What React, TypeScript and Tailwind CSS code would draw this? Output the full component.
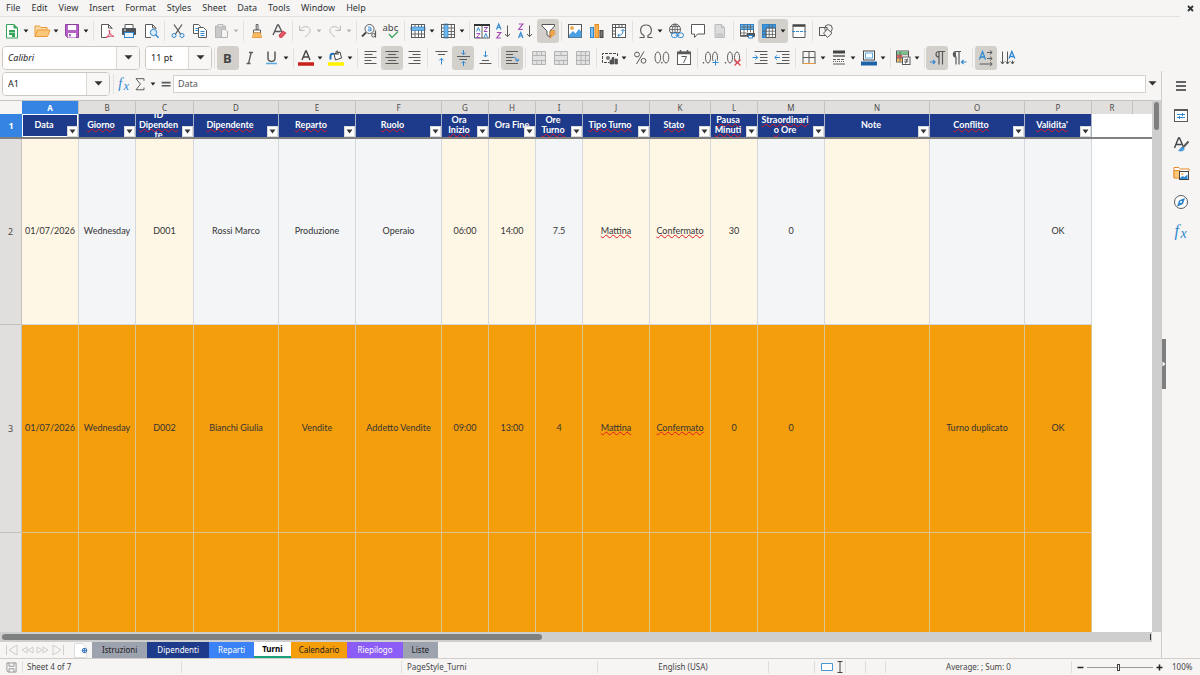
import React, { ReactNode } from "react";

const INK = "#5a5a5a";
const BLUE = "#2f87d0";

function Svg({ children, size = 18 }: { children: ReactNode; size?: number }) {
  return (
    <svg width={size} height={size} viewBox="0 0 18 18" fill="none" stroke={INK} strokeWidth="1" aria-hidden="true" className="shrink-0">
      {children}
    </svg>
  );
}

function Caret({ light = false }: { light?: boolean }) {
  return (
    <svg width="6" height="4" viewBox="0 0 6 4" aria-hidden="true" className="mt-px shrink-0">
      <path d="M0.6 0.5h4.8L3 3.6z" fill={light ? "#b5b5b5" : "#1f1f1f"} />
    </svg>
  );
}

function BigCaret() {
  return (
    <svg width="9" height="5" viewBox="0 0 9 5" aria-hidden="true">
      <path d="M0.5 0.3h8L4.5 4.6z" fill="#333" />
    </svg>
  );
}

const icons: Record<string, ReactNode> = {
  newDoc: (
    <>
      <path d="M3.500 2.500h7.500l3.500 3.500v10H3.500z" fill="#fff" stroke="#35a35a" />
      <path d="M11 2.500v3.500h3.500" fill="#35a35a" stroke="#35a35a" />
      <path d="M6 8h6v5H6z" fill="#35a35a" stroke="none" />
      <path d="M6 10.500h6" stroke="#bfe5cb" strokeWidth=".8" />
      <path d="M9 13h3v2H9z" fill="#35a35a" stroke="none" />
    </>
  ),
  open: (
    <>
      <path d="M2 14.500V4h4.500l1.500 1.500h6V8" fill="#fbd9a0" stroke="#ea9b3a" />
      <path d="M2 14.500L4.500 8H17l-2.500 6.500z" fill="#fbc879" stroke="#ea9b3a" />
    </>
  ),
  save: (
    <>
      <path d="M2.500 2.500h13v13h-11l-2-2z" fill="#b563c4" stroke="#8f3fa2" />
      <rect x="5" y="3" width="8" height="5" fill="#fff" stroke="none" />
      <rect x="5" y="11" width="8" height="4.500" fill="#fff" stroke="none" />
      <path d="M7 12v2.500" stroke="#8f3fa2" strokeWidth="1.500" />
    </>
  ),
  pdf: (
    <>
      <path d="M14 7V6l-3.500-3.500H3.500v13h5M10.500 2.500V6H14" fill="#fff" />
      <path d="M8 15.500c3-2 4.500-5 3.500-7.500-1 .5 0 5 4.500 6.500-2.500-.8-5-.5-8 1z" stroke="#d9435a" />
    </>
  ),
  print: (
    <>
      <path d="M5 6V2.500h8V6" fill="#fff" />
      <rect x="2" y="6" width="14" height="7" rx="1" fill="#4d5358" stroke="none" />
      <rect x="4.500" y="10.500" width="9" height="5" fill="#e8f3fc" stroke={BLUE} />
      <path d="M4 8h2" stroke="#fff" />
    </>
  ),
  preview: (
    <>
      <path d="M14 7V6l-3.500-3.500H3.500v13H9M10.500 2.500V6H14" fill="#fff" />
      <circle cx="11.500" cy="10.500" r="3.200" fill="#d9edfc" stroke={BLUE} />
      <path d="M13.800 12.800l2.700 3" stroke={BLUE} strokeWidth="1.400" />
    </>
  ),
  cut: (
    <>
      <path d="M5 2.500l6.500 9.500M13 2.500L6.500 12" strokeWidth="1.300" />
      <circle cx="5" cy="13.500" r="2" stroke={BLUE} />
      <circle cx="13" cy="13.500" r="2" stroke={BLUE} />
    </>
  ),
  copy: (
    <>
      <path d="M2.500 2.500h5l2 2v7h-7z" fill="#fff" />
      <path d="M4.500 6.500h3M4.500 8.500h3" stroke={BLUE} />
      <path d="M7.500 5.500h5l3 3v7h-8z" fill="#fff" />
      <path d="M9.500 9.500h4M9.500 11.500h4M9.500 13.500h4" stroke={BLUE} />
    </>
  ),
  paste: (
    <>
      <path d="M2.500 4h10v11.500h-10z" fill="#c9c9c9" stroke="#b5b5b5" />
      <path d="M5 2.500h5v2.500H5z" fill="#eee" stroke="#b5b5b5" />
      <path d="M8.500 7.500h4l2 2v6h-6z" fill="#f4f4f4" stroke="#b5b5b5" />
    </>
  ),
  brush: (
    <>
      <path d="M8.200 2.500h1.800v5.500H8.200z" fill="#fff" />
      <path d="M5.500 8h7v3h-7z" fill="#fff" />
      <path d="M5.500 11h7l1 4.500h-9z" fill="#fbc879" stroke="#ea9b3a" />
      <path d="M7 12v3M9 12v3M11 12v3" stroke="#ea9b3a" strokeWidth=".6" />
    </>
  ),
  clear: (
    <>
      <path d="M3 13L7.500 3h1L12 10M4.700 9.500h6" strokeWidth="1.400" />
      <path d="M9 13l4-4 3 2-4 4.500H9.800z" fill="#e25563" stroke="#c9303f" strokeWidth=".7" />
    </>
  ),
  undo: <path d="M3.500 3.500v5h5M3.500 8.500c3-5 9.500-5 10.500-1 .8 3-2.500 5.500-5 7.500" stroke="#bdbdbd" />,
  redo: <path d="M14.500 3.500v5h-5M14.500 8.500c-3-5-9.500-5-10.500-1-.8 3 2.500 5.500 5 7.500" stroke="#bdbdbd" />,
  find: (
    <>
      <circle cx="9.500" cy="7" r="4.500" fill="#fff" />
      <path d="M6 10.500l-4 4" strokeWidth="1.800" stroke="#444" />
      <path d="M8 5.500c1.500-1 3-.5 3 .8v2.700M11 7c-2-.3-3 .3-3 1.200s2 1.300 3 0" stroke={BLUE} />
      <circle cx="13.500" cy="13.200" r="1.800" />
      <path d="M15.500 8.500v7" strokeWidth="1.200" />
    </>
  ),
  spell: (
    <>
      <text x="0.500" y="8.500" fontSize="9.500" fontFamily="Noto Sans" fill="#444" stroke="none">abc</text>
      <path d="M7 12l3 3.500 6-6" stroke="#43a868" strokeWidth="1.400" />
    </>
  ),
  rowOp: (
    <>
      <rect x="2.500" y="2.500" width="13" height="13" fill="#fff" />
      <rect x="2" y="5" width="14" height="3.500" fill="#6db6ec" stroke={BLUE} strokeWidth=".7" />
      <path d="M2.500 2.500h13v13h-13zM2.500 12h13M6 2.500v2.500M6 8.500v7M9.500 2.500v2.500M9.500 8.500v7M12.500 2.500v2.500M12.500 8.500v7" strokeWidth=".9" />
    </>
  ),
  colOp: (
    <>
      <rect x="2.500" y="2.500" width="13" height="13" fill="#fff" />
      <rect x="5" y="2" width="4" height="14" fill="#6db6ec" stroke={BLUE} strokeWidth=".7" />
      <path d="M2.500 2.500h13v13h-13zM12.300 2.500v13M2.500 6H5M9 6h6.500M2.500 9.500H5M9 9.500h6.500M2.500 12.500H5M9 12.500h6.500" strokeWidth=".9" />
    </>
  ),
  sort: (
    <>
      <path d="M1.500 2.500h15v13.500h-15zM9 2.500v13.500" fill="#fff" />
      <path d="M1 3h16" stroke="#333" strokeWidth="2" />
      <path d="M3.500 9.500l1.800-4 1.800 4M11 15.500l1.800-4 1.800 4" stroke={BLUE} />
      <path d="M3.500 11.500h3.500l-3.500 4h3.500M11 5.500h3.500l-3.500 4h3.500" stroke="#a24bb5" />
    </>
  ),
  asc: (
    <>
      <path d="M1.500 7.500l2.200-5.500L6 7.500M2.300 5.500h3" stroke={BLUE} strokeWidth="1.200" />
      <path d="M1.800 10.500h4l-4 5.500h4" stroke="#a24bb5" strokeWidth="1.200" />
      <path d="M12.500 3.500v11M10 12l2.500 2.700L15 12" />
    </>
  ),
  desc: (
    <>
      <path d="M1.800 2h4l-4 5.500h4" stroke="#a24bb5" strokeWidth="1.200" />
      <path d="M1.500 16l2.200-5.500L6 16M2.300 14h3" stroke={BLUE} strokeWidth="1.200" />
      <path d="M12.500 3.500v11M10 12l2.500 2.700L15 12" />
    </>
  ),
  filter: (
    <>
      <path d="M3 2.500h12.500v1.500L11 9v6l-3-2V9L3 4z" fill="#fff" stroke="#555" />
      <path d="M12 8.500h4l-2 2.500h2.500l-5.500 5.500 1.300-4h-2z" fill="#f5a94b" stroke="#df7f1f" strokeWidth=".6" />
    </>
  ),
  image: (
    <>
      <rect x="2.500" y="2.500" width="13" height="13" fill="#fff" />
      <path d="M3 13l4-4 2.500 2.500L13 7l2.500 3v5.500H3z" fill="#4aa0e0" stroke="none" />
      <circle cx="6" cy="6" r="1.500" fill="#f9b455" stroke="#e58a22" strokeWidth=".6" />
    </>
  ),
  chart: (
    <>
      <rect x="2.500" y="5.500" width="3" height="10" fill="#7fc0f0" stroke={BLUE} />
      <rect x="7" y="2.500" width="3.500" height="13" fill="#f9b455" stroke="#e58a22" />
      <rect x="12" y="8.500" width="3" height="7" fill="#777" stroke="#444" />
    </>
  ),
  pivot: (
    <>
      <rect x="2.500" y="2.500" width="13" height="13" fill="#fff" />
      <path d="M2.500 5.500h13M5.500 2.500v13M9 2.500v3M12 2.500v3M2.500 9h3M2.500 12h3" />
      <path d="M8 13.500c4 0 5-2 5-6M11.300 9l1.700-1.700L14.700 9M9.500 11.800L7.800 13.500l1.700 1.500" stroke={BLUE} />
    </>
  ),
  omega: <path d="M2.500 15.500H7v-2C2 11 2.500 3 9 3s7 8 2 10.500v2h4.500" strokeWidth="1.200" />,
  link: (
    <>
      <circle cx="8" cy="7.500" r="5.500" />
      <path d="M2.500 7.500h11M8 2v11M3.500 4.500h9M4 10.500h8M8 2c-3.500 3-3.500 8 0 11M8 2c3.500 3 3.500 8 0 11" strokeWidth=".8" />
      <rect x="4.500" y="11" width="6" height="4.500" rx="2.200" fill="#f6f5f4" stroke={BLUE} />
      <rect x="10.500" y="11" width="6" height="4.500" rx="2.200" fill="#f6f5f4" stroke={BLUE} />
      <path d="M8.500 13.200h4" stroke={BLUE} />
    </>
  ),
  comment: <path d="M2.500 2.500h13v9.500H8.500L5.500 15.500V12h-3z" fill="#fff" />,
  header: (
    <>
      <path d="M4 2.500h6.500l3 3v10H4z" fill="#dcdcdc" stroke="#bcbcbc" />
      <path d="M10.500 2.500v3h3M6 12h5.500v2H6z" stroke="#bcbcbc" />
    </>
  ),
  printArea: (
    <>
      <path d="M2.500 2.500h13v11h-13z" fill="#fff" />
      <path d="M2.500 2.500h13v5h-13z" fill="#6db6ec" stroke={BLUE} />
      <path d="M2.500 7.500v7h6M2.500 11h6M6 2.500v12M9.500 2.500v8M12.500 2.500v8M2.500 5h13M15.500 7.500v3" strokeWidth=".8" />
      <path d="M9 11.500h7.500v3H9z" fill="#4d5358" stroke="#4d5358" />
      <path d="M10.500 13.500h4v2.500h-4z" fill="#fff" stroke={BLUE} />
    </>
  ),
  freeze: (
    <>
      <rect x="2.500" y="2.500" width="13" height="13" fill="#fff" />
      <path d="M2.500 2.500h13v3.500h-9.500v9.500h-3.500z" fill="#3d93d8" stroke={BLUE} />
      <path d="M6 6h9.500M2.500 9.200h13M2.500 12.400h13M6 6v9.500M9.200 2.500v13M12.400 2.500v13M6 15.500h9.500V6" strokeWidth=".8" />
    </>
  ),
  split: (
    <>
      <path d="M3 4.500v11h12v-11" fill="#fff" />
      <path d="M2.500 3.500h13" stroke="#444" strokeWidth="2.500" />
      <path d="M2 9.500h14" stroke={BLUE} strokeDasharray="3 1" />
    </>
  ),
  shapes: (
    <>
      <rect x="2.500" y="5.500" width="7.500" height="8" />
      <circle cx="11.500" cy="6.500" r="3.800" />
      <path d="M10.500 7l4.500 4.200-4.500 4.300-4-4.300z" fill="#f6f5f4" />
    </>
  ),
  bold: <text x="4" y="13.800" fontSize="13" fontWeight="700" fontFamily="Noto Sans" fill="#444" stroke="none">B</text>,
  italic: <path d="M8 3.500h4M5.500 14.500h4M10.200 3.500L7.500 14.500" strokeWidth="1.300" />,
  underline: (
    <>
      <path d="M5 2.500v6.500c0 4.500 7 4.500 7 0V2.500" strokeWidth="1.500" />
      <path d="M3 14.500h11" stroke="#5aaae6" strokeWidth="1.500" />
    </>
  ),
  fontColor: (
    <>
      <path d="M5 11L8.700 2h.6L13 11M6.300 8h5.400" strokeWidth="1.400" stroke="#444" />
      <path d="M1 15h16" stroke="#c9211e" strokeWidth="3.500" />
    </>
  ),
  highlight: (
    <>
      <path d="M7 5l6-2 1.500 6-6 2z" fill="#fff" stroke="#444" />
      <path d="M9 6V3c0-1.500 2-1.500 2 0v3" stroke="#444" />
      <path d="M7 5C4 4 3 5.500 3.500 10.500" stroke="#1b70b8" strokeWidth="2" />
      <path d="M1 15h16" stroke="#fff200" strokeWidth="3.500" />
    </>
  ),
  left: <path d="M3.500 2.500h12M3.500 5.500h8M3.500 8.500h12M3.500 11.500h7M3.500 14.500h12" />,
  center: <path d="M2.500 2.500h13M5 5.500h8M2.500 8.500h13M5 11.500h8M2.500 14.500h13" />,
  right: <path d="M3.500 2.500h12M7.500 5.500h8M3.500 8.500h12M8.500 11.500h7M3.500 14.500h12" />,
  vtop: (
    <>
      <path d="M3.500 2.500h12M6 5.500h7" />
      <path d="M9.500 15.500v-6M7.300 11.500l2.200-2.200 2.200 2.200" stroke={BLUE} />
    </>
  ),
  vmid: (
    <>
      <path d="M3 7.500h13M5.500 10.500h7.500" />
      <path d="M9.500 1v4.500M7.500 3.700l2 2 2-2M9.500 17v-4.500M7.500 14.300l2-2 2 2" stroke={BLUE} />
    </>
  ),
  vbot: (
    <>
      <path d="M3.500 14.500h12M6 11.500h7" />
      <path d="M9.500 2v6M7.500 6l2 2 2-2" stroke={BLUE} />
    </>
  ),
  wrap: (
    <>
      <path d="M3 2.500h12M3 5.500h7M3 8.500h8M3 11.500h6M3 14.500h12" />
      <path d="M9.500 8.500c3-.5 4 .5 5 3.500M12 10.500l2.500 2 1.500-2.500" stroke={BLUE} />
    </>
  ),
  merge1: <path d="M2.500 2.500h13v13h-13zM2.500 6.500h13M2.500 11.500h13M7 2.500v4M11.500 2.500v4M7 11.500v4M11.500 11.500v4" fill="#e2e2e2" stroke="#b3b3b3" />,
  merge2: <path d="M2.500 2.500h13v13h-13zM2.500 6.500h13M2.500 11.500h13M9 2.500v4M7 11.500v4M11.500 11.500v4" fill="#e2e2e2" stroke="#b3b3b3" />,
  merge3: <path d="M2.500 2.500h13v13h-13zM2.500 6.500h13M2.500 11.500h13M7 2.500v13M11.500 2.500v13" fill="#e2e2e2" stroke="#b3b3b3" />,
  currency: (
    <>
      <path d="M16.500 7V4.500h-15v9h7" stroke="#444" strokeDasharray="3 1" />
      <circle cx="7" cy="9" r="2" fill="#777" stroke="none" />
      <path d="M9 15v-4h2V8.500h2V15zM14 15v-5h2.500v5z" fill="#555" stroke="#444" strokeWidth=".6" />
    </>
  ),
  percent: (
    <>
      <circle cx="6" cy="5.500" r="2.400" />
      <circle cx="12.500" cy="11.800" r="2.400" />
      <path d="M13 2.500L5.500 15" />
    </>
  ),
  number: (
    <>
      <ellipse cx="4.800" cy="8.500" rx="2.800" ry="5.500" />
      <ellipse cx="13" cy="8.500" rx="2.800" ry="5.500" />
      <path d="M8.800 13v1.500" strokeWidth="1.300" />
    </>
  ),
  date: (
    <>
      <rect x="2.500" y="3" width="13" height="12.500" fill="#fff" />
      <path d="M2.500 4h13" strokeWidth="2.500" />
      <path d="M5.500 1v3M12.500 1v3" strokeWidth="1.500" />
      <path d="M6.500 7.500h5l-3 6.500" />
    </>
  ),
  addDec: (
    <>
      <path d="M1.500 13v1.500" strokeWidth="1.300" />
      <ellipse cx="6" cy="8.500" rx="2.500" ry="5.500" />
      <ellipse cx="13" cy="8.500" rx="2.500" ry="5.500" />
      <path d="M13.500 10v7M10 13.500h7" stroke="#f6f5f4" strokeWidth="3" />
      <path d="M13.500 10.500v6M10.500 13.500h6" stroke={BLUE} />
    </>
  ),
  delDec: (
    <>
      <path d="M1.500 13v1.500" strokeWidth="1.300" />
      <ellipse cx="6" cy="8.500" rx="2.500" ry="5.500" />
      <ellipse cx="13" cy="8.500" rx="2.500" ry="5.500" />
      <path d="M10.500 10.500l6 6M16.500 10.500l-6 6" stroke="#e0454f" strokeWidth="1.200" />
    </>
  ),
  indent: (
    <>
      <path d="M3.500 2.500h13M9 5.500h7.500M9 8.500h7.500M9 11.500h7.500M3.500 14.500h13" />
      <path d="M1.500 8.500h5M4.500 6.300l2.200 2.200-2.200 2.200" stroke={BLUE} />
    </>
  ),
  outdent: (
    <>
      <path d="M3.500 2.500h13M9 5.500h7.500M9 8.500h7.500M9 11.500h7.500M3.500 14.500h13" />
      <path d="M7 8.500H2M4 6.300L1.800 8.500 4 10.700" stroke={BLUE} />
    </>
  ),
  borders: (
    <>
      <path d="M3 2.500h12M3 15V2.500M15 2.500v12.500M9 2.500v12.500M3 8.500h12" />
      <path d="M3 14.500h12" stroke="#e79a3d" />
    </>
  ),
  lineStyle: (
    <>
      <path d="M3 3h12" strokeWidth="3" stroke="#444" />
      <path d="M3 7h12" strokeWidth="1.500" />
      <path d="M3 10.500h12" strokeDasharray="3 1" />
      <path d="M3 12.500h12" strokeDasharray="1 1" />
      <path d="M3 15h12" />
    </>
  ),
  borderColor: (
    <>
      <rect x="3.500" y="2" width="11" height="9" fill="#fff" stroke="#444" />
      <rect x="5.500" y="4" width="7" height="5" fill="none" stroke="#5aaae6" />
      <path d="M1 14.500h16" stroke="#1f63a8" strokeWidth="4" />
    </>
  ),
  conditional: (
    <>
      <rect x="2.500" y="2" width="12" height="11" fill="#fff" />
      <rect x="3" y="2.500" width="11" height="3" fill="#74c48a" stroke="none" />
      <rect x="3" y="6" width="5" height="3" fill="#e46464" stroke="none" />
      <rect x="3" y="9.500" width="5" height="3" fill="#f4b659" stroke="none" />
      <path d="M2.500 5.800h12M2.500 9.300h7M6 2v11" strokeWidth=".7" />
      <rect x="8.500" y="8" width="7.500" height="7.500" fill="#fff" />
      <path d="M10.300 10.800h4M10.300 12.800h4M13.500 9.500l-2 5" />
    </>
  ),
  ltr: (
    <>
      <path d="M17 2.500H11c-4 0-4 5.500 0 5.500V15.500M11 2.500v6M14.500 2.500v13" strokeWidth="1.200" />
      <path d="M2 13h5M5 11l2 2-2 2" stroke={BLUE} strokeWidth="1.200" />
    </>
  ),
  rtl: (
    <>
      <path d="M11 2.500H6C2.500 2.500 2.500 8 6 8V15.500M9 2.500v13" strokeWidth="1.200" />
      <path d="M6 3v5c-3 0-3-5 0-5" fill={INK} stroke="none" />
      <path d="M16.500 13h-5M13.500 11l-2 2 2 2" stroke={BLUE} strokeWidth="1.200" />
    </>
  ),
  textH: (
    <>
      <path d="M2.500 10.500l3-8 3 8M3.500 8h4" stroke={BLUE} strokeWidth="1.300" />
      <path d="M10 3.500h5M10 9.500h5M2.500 15H15M13 1.500l2.200 2-2.200 2M13 7.500l2.200 2-2.200 2M13 13l2.200 2-2.200 2" />
    </>
  ),
  textV: (
    <>
      <path d="M10 9.500l2.800-7 3 7M11 7.500h4" stroke={BLUE} strokeWidth="1.300" />
      <path d="M3.500 2.500V15M8.500 2.500V15M13.500 11.500V15M1.700 12.500L3.500 15l1.800-2.500M6.700 12.500L8.500 15l1.800-2.500M11.700 12.500l1.800 2.500 1.800-2.500" />
    </>
  ),
  fx: (
    <>
      <text x="2.500" y="13.500" fontSize="16" fontStyle="italic" fontFamily="Liberation Serif" fill={BLUE} stroke="none">f</text>
      <text x="8.500" y="15.500" fontSize="14" fontStyle="italic" fontFamily="Liberation Serif" fill={BLUE} stroke="none">x</text>
    </>
  ),
  sigma: <path d="M13.500 5.500V3h-9l5 6.200-5 6.300h9V13" strokeWidth="1.100" />,
  equals: <path d="M3 7.500h10M3 11h10" strokeWidth="1.800" />,
  menu: <path d="M4 5h10M4 9h10M4 13h10" stroke="#333" strokeWidth="1.500" />,
  properties: (
    <>
      <rect x="2.500" y="3.500" width="13" height="12" fill="#fff" />
      <path d="M2 4h14" strokeWidth="2" />
      <path d="M5 8.500h8M5 11.500h8M10.500 7v3M7.500 10v3" stroke={BLUE} />
    </>
  ),
  styles: (
    <>
      <path d="M2.500 13L6.500 3h1l3.500 8M4 9.500h5.500" strokeWidth="1.400" stroke="#444" />
      <path d="M16.500 6.500l-6 6.500" strokeWidth="2" />
      <path d="M10.500 12c-2 0-2 3-4 3.500 3 1 6 0 5.500-2.200z" fill="#4aa0e0" stroke={BLUE} strokeWidth=".8" />
    </>
  ),
  gallery: (
    <>
      <path d="M2 14V3.500h5l1.500 1.500H17v2" fill="#fff" stroke="#ea8a2a" />
      <path d="M2 14V6.500h6V14z" fill="#fbc879" stroke="#ea8a2a" />
      <rect x="7.500" y="7.500" width="9" height="8" fill="#fff" stroke="#444" />
      <path d="M8 14l2.500-2 2 1 3-2.500V15H8z" fill={BLUE} stroke="none" />
      <circle cx="10.500" cy="10" r="1" fill="#f5a94b" stroke="none" />
    </>
  ),
  navigator: (
    <>
      <circle cx="9" cy="9" r="6.500" fill="#fff" />
      <path d="M12.500 5.500l-2 5.500-5 2 2-5.500z" fill={BLUE} stroke="#1b70b8" strokeWidth=".6" />
      <circle cx="9" cy="9" r="1" fill="#fff" stroke="none" />
    </>
  ),
  disk: (
    <>
      <path d="M3.500 3.500h11v11h-9.500l-1.500-1.500z" stroke="#888" />
      <path d="M6 3.500v4h6v-4M6 14.500v-4h6v4" stroke="#888" />
    </>
  ),
};

type Tool = { id: string; label: string; drop?: boolean; on?: boolean; faded?: boolean } | "sep" | "thin";
const t = (id: string, label: string, drop = false, on = false, faded = false): Tool => ({ id, label, drop, on, faded });

const standard: Tool[] = [
  t("newDoc", "New", true), t("open", "Open", true), t("save", "Save", true), "sep",
  t("pdf", "Export as PDF"), t("print", "Print"), t("preview", "Print preview"), "sep",
  t("cut", "Cut"), t("copy", "Copy"), t("paste", "Paste", true, false, true), "sep",
  t("brush", "Clone formatting"), t("clear", "Clear formatting"), "thin",
  t("undo", "Undo", true, false, true), t("redo", "Redo", true, false, true), "thin",
  t("find", "Find and replace"), t("spell", "Spelling"), "sep",
  t("rowOp", "Row", true), t("colOp", "Column", true), "thin",
  t("sort", "Sort"), t("asc", "Sort ascending"), t("desc", "Sort descending"), t("filter", "AutoFilter", false, true), "sep",
  t("image", "Insert image"), t("chart", "Insert chart"), t("pivot", "Pivot table"), "sep",
  t("omega", "Special character", true), t("link", "Hyperlink"), t("comment", "Comment"), t("header", "Headers and footers"), "sep",
  t("printArea", "Print area"), t("freeze", "Freeze rows and columns", true, true), t("split", "Split window"), "sep",
  t("shapes", "Draw functions"),
];

const formatting: Tool[] = [
  t("bold", "Bold", false, true), t("italic", "Italic"), t("underline", "Underline", true), "thin",
  t("fontColor", "Font color", true), t("highlight", "Background color", true), "thin",
  t("left", "Align left"), t("center", "Align center", false, true), t("right", "Align right"), "sep",
  t("vtop", "Align top"), t("vmid", "Center vertically", false, true), t("vbot", "Align bottom"), "sep",
  t("wrap", "Wrap text", false, true), "sep",
  t("merge1", "Merge and center"), t("merge2", "Merge cells"), t("merge3", "Unmerge cells"), "sep",
  t("currency", "Currency", true), t("percent", "Percent"), t("number", "Number"), t("date", "Date"), "sep",
  t("addDec", "Add decimal place"), t("delDec", "Delete decimal place"), "sep",
  t("indent", "Increase indent"), t("outdent", "Decrease indent"), "sep",
  t("borders", "Borders", true), t("lineStyle", "Border style", true), t("borderColor", "Border color", true), "thin",
  t("conditional", "Conditional formatting", true), "thin",
  t("ltr", "Left to right", false, true), t("rtl", "Right to left"), "sep",
  t("textH", "Horizontal text", false, true), t("textV", "Vertical text"),
];

function Tools({ items }: { items: Tool[] }) {
  return (
    <>
      {items.map((it, i) =>
        it === "sep" || it === "thin" ? (
          <span key={i} className={it === "sep" ? "flex h-5 w-[5px] justify-center" : "flex h-5 w-1 justify-center"}>
            <span className="w-px bg-[#e3e1df]" />
          </span>
        ) : (
          <button
            key={i}
            type="button"
            aria-label={it.label}
            className={`flex h-6 shrink-0 items-center rounded-[3px] ${it.drop ? "w-[30px]" : "w-[22px]"} ${it.on ? "bg-[#d3cfcb]" : ""}`}
          >
            <span className="flex w-[22px] shrink-0 justify-center"><Svg>{icons[it.id]}</Svg></span>
            {it.drop && <Caret light={it.faded} />}
          </button>
        )
      )}
    </>
  );
}

function Combo({ label, value, wide, italic }: { label: string; value: string; wide: string; italic?: boolean }) {
  return (
    <div className={`flex h-6 shrink-0 overflow-hidden rounded-[4px] border border-[#cdc7c2] bg-white ${wide}`}>
      <input aria-label={label} defaultValue={value} className={`min-w-0 flex-1 bg-white pl-[5px] text-[9px] text-[#222] outline-none ${italic ? "italic" : ""}`} />
      <button type="button" aria-label={`${label} list`} className="flex w-[23px] items-center justify-center border-l border-[#dcd8d4] bg-[#f8f7f6]">
        <BigCaret />
      </button>
    </div>
  );
}

type Line = { text: string; bad?: boolean }[];
const w = (text: string, bad = true) => ({ text, bad });
const columns: { letter: string; width: string; lines: Line[]; full?: boolean; cream?: boolean }[] = [
  { letter: "A", width: "w-[57px]", lines: [[w("Data", false)]], cream: true },
  { letter: "B", width: "w-[57px]", lines: [[w("Giorno")]] },
  { letter: "C", width: "w-[58px]", lines: [[w("ID", false)], [w("Dipenden")], [w("te")]], cream: true },
  { letter: "D", width: "w-[85px]", lines: [[w("Dipendente")]] },
  { letter: "E", width: "w-[77px]", lines: [[w("Reparto")]] },
  { letter: "F", width: "w-[86px]", lines: [[w("Ruolo")]] },
  { letter: "G", width: "w-[47px]", lines: [[w("Ora", false)], [w("Inizio")]], cream: true },
  { letter: "H", width: "w-[47px]", lines: [[w("Ora Fine", false)]], full: true, cream: true },
  { letter: "I", width: "w-[47px]", lines: [[w("Ore", false)], [w("Turno")]] },
  { letter: "J", width: "w-[67px]", lines: [[w("Tipo Turno")]], cream: true },
  { letter: "K", width: "w-[61px]", lines: [[w("Stato")]], cream: true },
  { letter: "L", width: "w-[47px]", lines: [[w("Pausa")], [w("Minuti")]], cream: true },
  { letter: "M", width: "w-[67px]", lines: [[w("Straordinari")], [w("o"), w(" Ore", false)]] },
  { letter: "N", width: "w-[105px]", lines: [[w("Note", false)]], cream: true },
  { letter: "O", width: "w-[95px]", lines: [[w("Conflitto")]] },
  { letter: "P", width: "w-[67px]", lines: [[w("Validita'")]] },
];

const rows = [
  { n: 2, height: "h-[186px]", alert: false, cells: ["01/07/2026", "Wednesday", "D001", "Rossi Marco", "Produzione", "Operaio", "06:00", "14:00", "7.5", "Mattina", "Confermato", "30", "0", "", "", "OK"] },
  { n: 3, height: "h-[208px]", alert: true, cells: ["01/07/2026", "Wednesday", "D002", "Bianchi Giulia", "Vendite", "Addetto Vendite", "09:00", "13:00", "4", "Mattina", "Confermato", "0", "0", "", "Turno duplicato", "OK"] },
  { n: 4, height: "h-[208px]", alert: true, cells: ["01/07/2026", "Wednesday", "D002", "Bianchi Giulia", "Vendite", "Addetto Vendite", "14:00", "18:00", "4", "Pomeriggio", "Confermato", "0", "0", "", "Turno duplicato", "OK"] },
];

const wavy = "underline decoration-wavy decoration-[#e01b24] decoration-1 underline-offset-0 [text-decoration-skip-ink:none]";

function Sheet() {
  return (
    <table className="w-full table-fixed border-separate border-spacing-0 bg-white">
      <colgroup>
        <col className="w-[22px]" />
        {columns.map((c) => <col key={c.letter} className={c.width} />)}
        <col className="w-[41px]" />
        <col />
      </colgroup>
      <thead>
        <tr className="h-[14px] text-[8px] leading-[12px] text-[#4a4a4a]">
          <td className="border-t border-[#c9c6c3] bg-[#f6f5f4] p-0" />
          {columns.map((c) => (
            <th
              key={c.letter}
              scope="col"
              className={`border-t border-r border-[#c4c1be] p-0 ${c.letter === "A" ? "bg-[#3584e4] font-bold text-white" : "bg-[#e1dfdd] font-normal"}`}
            >
              {c.letter}
            </th>
          ))}
          <th scope="col" className="border-t border-r border-[#c4c1be] bg-[#e1dfdd] p-0 font-normal">R</th>
          <td className="border-t border-[#c4c1be] bg-[#e1dfdd] p-0" />
        </tr>
        <tr className="h-[25px]">
          <th scope="row" className="border-b-2 border-[#808080] bg-[#3584e4] p-0 text-[9px] font-bold text-white">1</th>
          {columns.map((c) => (
            <th key={c.letter} className="border-b-2 border-[#808080] bg-[#1e3a8a] p-0 font-['Lato'] text-[9px] leading-[10px] font-bold text-white">
              <div className={`relative flex h-[23px] flex-col items-center justify-center overflow-hidden border-r border-[#aab2c8] pb-px whitespace-nowrap ${c.full ? "" : "pr-3"} ${c.letter === "A" ? "shadow-[inset_0_0_0_1px_#fff]" : ""}`}>
                {c.lines.map((line, i) => (
                  <span key={i} className="whitespace-pre">
                    {line.map((p) => <span key={p.text} className={p.bad ? wavy : ""}>{p.text}</span>)}
                  </span>
                ))}
                <button type="button" aria-label={`Filter column ${c.letter}`} className="absolute right-0 bottom-0 flex h-[11px] w-[11px] items-center justify-center border border-[#d9d9d9] bg-white">
                  <svg width="7" height="5" viewBox="0 0 7 5" aria-hidden="true"><path d="M0.500 0.500h6L3.500 4.500z" fill="#333" /></svg>
                </button>
              </div>
            </th>
          ))}
          <td colSpan={2} className="border-b-2 border-[#808080] p-0" />
        </tr>
      </thead>
      <tbody className="font-['Lato'] text-[9px] text-[#333]">
        {rows.map((r) => (
          <tr key={r.n} className={r.height}>
            <th scope="row" className="border-r border-b border-[#c4c1be] bg-[#e1dfdd] p-0 font-['Noto_Sans'] text-[9px] font-normal text-[#4a4a4a]">{r.n}</th>
            {r.cells.map((v, i) => (
              <td
                key={i}
                className={`border-r border-b px-0 pt-0 pb-0.5 text-center align-middle whitespace-nowrap ${r.alert ? "border-[#dcc392] bg-[#f59e0b]" : columns[i].cream ? "border-[#d5d8dc] bg-[#fff7e6]" : "border-[#d5d8dc] bg-[#f3f5f7]"}`}
              >
                <span className={v === "Mattina" || v === "Pomeriggio" || v === "Confermato" ? wavy : ""}>{v}</span>
              </td>
            ))}
            <td colSpan={2} className="p-0" />
          </tr>
        ))}
      </tbody>
    </table>
  );
}

const tabs = [
  { name: "Istruzioni", style: "bg-[#9ca3af] text-[#1c1c1c] px-[10px]" },
  { name: "Dipendenti", style: "bg-[#1e3a8a] text-white px-[10px]" },
  { name: "Reparti", style: "bg-[#3b82f6] text-white px-[9px]" },
  { name: "Turni", style: "bg-white text-black font-bold border-b-2 border-[#1aa179] px-2" },
  { name: "Calendario", style: "bg-[#f59e0b] text-[#1c1c1c] px-2" },
  { name: "Riepilogo", style: "bg-[#8b5cf6] text-white px-[10px]" },
  { name: "Liste", style: "bg-[#9ca3af] text-[#1c1c1c] px-[9px]" },
];

const navPaths = [
  { label: "First sheet", d: "M1.500 2v10M12 2L4 7l8 5z" },
  { label: "Previous sheet", d: "M7 4L2 7l5 3zM13 4L8 7l5 3z" },
  { label: "Next sheet", d: "M2 4l5 3-5 3zM8 4l5 3-5 3z" },
  { label: "Last sheet", d: "M13.500 2v10M3 2l8 5-8 5z" },
];

const menus = ["File", "Edit", "View", "Insert", "Format", "Styles", "Sheet", "Data", "Tools", "Window", "Help"];

const side = [
  { id: "properties", label: "Properties" },
  { id: "styles", label: "Styles" },
  { id: "gallery", label: "Gallery" },
  { id: "navigator", label: "Navigator" },
  { id: "fx", label: "Functions" },
];

export default function App() {
  return (
    <div className="flex h-screen flex-col overflow-hidden bg-[#f6f5f4] font-['Noto_Sans',sans-serif] text-[#2e3436]">
      <header className="flex h-[17px] shrink-0 items-center justify-between">
        <nav className="flex h-full flex-1 items-center gap-[11px] border-b border-[#e3e1df] pl-[6px] text-[9px]">
          {menus.map((m) => <button key={m} type="button">{m}</button>)}
        </nav>
        <button type="button" aria-label="Close document" className="mr-1 ml-1 flex h-3 w-3 items-center justify-center">
          <svg width="7" height="7" viewBox="0 0 7 7" aria-hidden="true"><path d="M1 1l5 5M6 1L1 6" stroke="#2e3436" strokeWidth="1.800" /></svg>
        </button>
      </header>

      <div className="flex h-[27px] shrink-0 items-center pl-px"><Tools items={standard} /></div>
      <div className="flex h-[27px] shrink-0 items-center pl-[2px]">
        <Combo label="Font name" value="Calibri" wide="w-[138px] mr-[5px]" italic />
        <Combo label="Font size" value="11 pt" wide="w-[67px]" />
        <span className="flex h-5 w-[5px] justify-center"><span className="w-px bg-[#e3e1df]" /></span>
        <Tools items={formatting} />
      </div>

      <div className="flex min-h-0 flex-1">
        <main className="flex min-w-0 flex-1 flex-col">
          <div className="flex h-[29px] shrink-0 items-center pb-1 pl-[2px]">
            <Combo label="Name box" value="A1" wide="w-[108px]" />
            <span className="ml-[3px] h-5 w-px bg-[#e3e1df]" />
            <button type="button" aria-label="Function wizard" className="ml-0.5 flex w-4 justify-center"><Svg size={16}>{icons.fx}</Svg></button>
            <button type="button" aria-label="Select function" className="flex w-7 items-center gap-0.5"><Svg size={16}>{icons.sigma}</Svg><Caret /></button>
            <button type="button" aria-label="Formula" className="flex w-[13px] justify-center"><Svg size={16}>{icons.equals}</Svg></button>
            <input aria-label="Input line" defaultValue="Data" className="h-[18px] min-w-0 flex-1 border border-[#d5d0cc] bg-white pl-1 text-[9px] text-[#555] outline-none" />
            <button type="button" aria-label="Expand formula bar" className="flex w-[15px] pl-0.5"><BigCaret /></button>
          </div>

          <div className="flex min-h-0 flex-1">
            <div className="min-w-0 flex-1 overflow-hidden"><Sheet /></div>
            <div className="w-[9px] shrink-0 bg-[#cecece] px-0.5 pt-0.5">
              <div className="h-7 rounded-full bg-[#7f7f7f]" />
            </div>
          </div>

          <div className="mr-[9px] flex h-[10px] shrink-0 items-center justify-between bg-[#cecece] pr-px pl-0.5">
            <div className="h-1.5 w-[47%] rounded-full bg-[#7f8180]" />
            <div className="h-1.5 w-px bg-[#333]" />
          </div>

          <div className="flex h-[16px] shrink-0 text-[8px]">
            <div className="flex w-[74px] items-center pl-[5px]">
              {navPaths.map((n) => (
                <button key={n.label} type="button" aria-label={n.label}>
                  <svg width="15" height="14" viewBox="0 0 15 14" fill="none" stroke="#d0cecc" aria-hidden="true"><path d={n.d} /></svg>
                </button>
              ))}
            </div>
            <button type="button" aria-label="Add sheet" className="flex w-[18px] items-center">
              <svg width="14" height="15" viewBox="0 0 14 15" fill="none" aria-hidden="true">
                <path d="M0.500 0.500h8l4 4v10h-12z" fill="#fff" stroke="#dedcda" />
                <circle cx="10.500" cy="7.500" r="2.200" fill="#fff" stroke="#2a6cb8" />
                <path d="M10.500 5v5M8 7.500h5" stroke="#2a6cb8" strokeWidth=".8" />
              </svg>
            </button>
            {tabs.map((tab) => <button key={tab.name} type="button" className={tab.style}>{tab.name}</button>)}
          </div>
        </main>

        <aside className="relative flex w-[39px] shrink-0 flex-col items-center gap-[11px] border-l border-[#cfccc9] pt-[6px]">
          <button type="button" aria-label="Sidebar settings"><Svg>{icons.menu}</Svg></button>
          {side.map((s) => <button key={s.id} type="button" aria-label={s.label}><Svg>{icons[s.id]}</Svg></button>)}
          <div className="absolute top-[268px] left-0 flex h-[50px] w-1 items-center bg-[#7f7f7f]">
            <svg width="4" height="6" viewBox="0 0 4 6" aria-hidden="true"><path d="M0.500 0.500L3.500 3 0.500 5.500z" fill="#fff" /></svg>
          </div>
        </aside>
      </div>

      <footer className="grid h-[17px] shrink-0 grid-cols-[22px_159fr_220fr_196fr_171fr_46px_31px_20px_20px_186fr_129px] items-center border-t border-[#d0cdca] text-[8px] text-[#444] [&>*]:flex [&>*]:h-3 [&>*]:items-center [&>*+*]:border-l [&>*+*]:border-[#e0dedc]">
        <div className="pl-1"><Svg size={15}>{icons.disk}</Svg></div>
        <div className="pl-1">Sheet 4 of 7</div>
        <div />
        <div className="pl-[5px]">PageStyle_Turni</div>
        <div className="justify-center">English (USA)</div>
        <div />
        <div className="gap-1 pl-1.5">
          <svg width="12" height="8" viewBox="0 0 12 8" fill="#fff" stroke="#4a98cf" aria-hidden="true"><path d="M0.500 0.500h11v7h-11z" /></svg>
          <svg width="6" height="12" viewBox="0 0 6 12" fill="none" stroke="#444" aria-hidden="true"><path d="M0.500 0.500h5M0.500 11.500h5M3 0.500v11" /></svg>
        </div>
        <div />
        <div />
        <div className="justify-center">Average: ; Sum: 0</div>
        <div className="pl-[5px]">
          <button type="button" aria-label="Zoom out"><svg width="7" height="7" viewBox="0 0 7 7" aria-hidden="true"><path d="M0.500 3.500h6" stroke="#222" strokeWidth="1.500" /></svg></button>
          <input
            type="range"
            aria-label="Zoom"
            defaultValue={48}
            className="mx-[3px] h-3 w-[66px] appearance-none bg-transparent [&::-webkit-slider-runnable-track]:h-px [&::-webkit-slider-runnable-track]:bg-[#9a9a9a] [&::-webkit-slider-thumb]:-mt-[3px] [&::-webkit-slider-thumb]:h-[7px] [&::-webkit-slider-thumb]:w-[3px] [&::-webkit-slider-thumb]:appearance-none [&::-webkit-slider-thumb]:border [&::-webkit-slider-thumb]:border-[#444] [&::-webkit-slider-thumb]:bg-[#f6f5f4]"
          />
          <button type="button" aria-label="Zoom in"><svg width="7" height="7" viewBox="0 0 7 7" aria-hidden="true"><path d="M0.500 3.500h6M3.500 0.500v6" stroke="#222" strokeWidth="1.500" /></svg></button>
          <span className="pl-[9px]">100%</span>
        </div>
      </footer>
    </div>
  );
}
